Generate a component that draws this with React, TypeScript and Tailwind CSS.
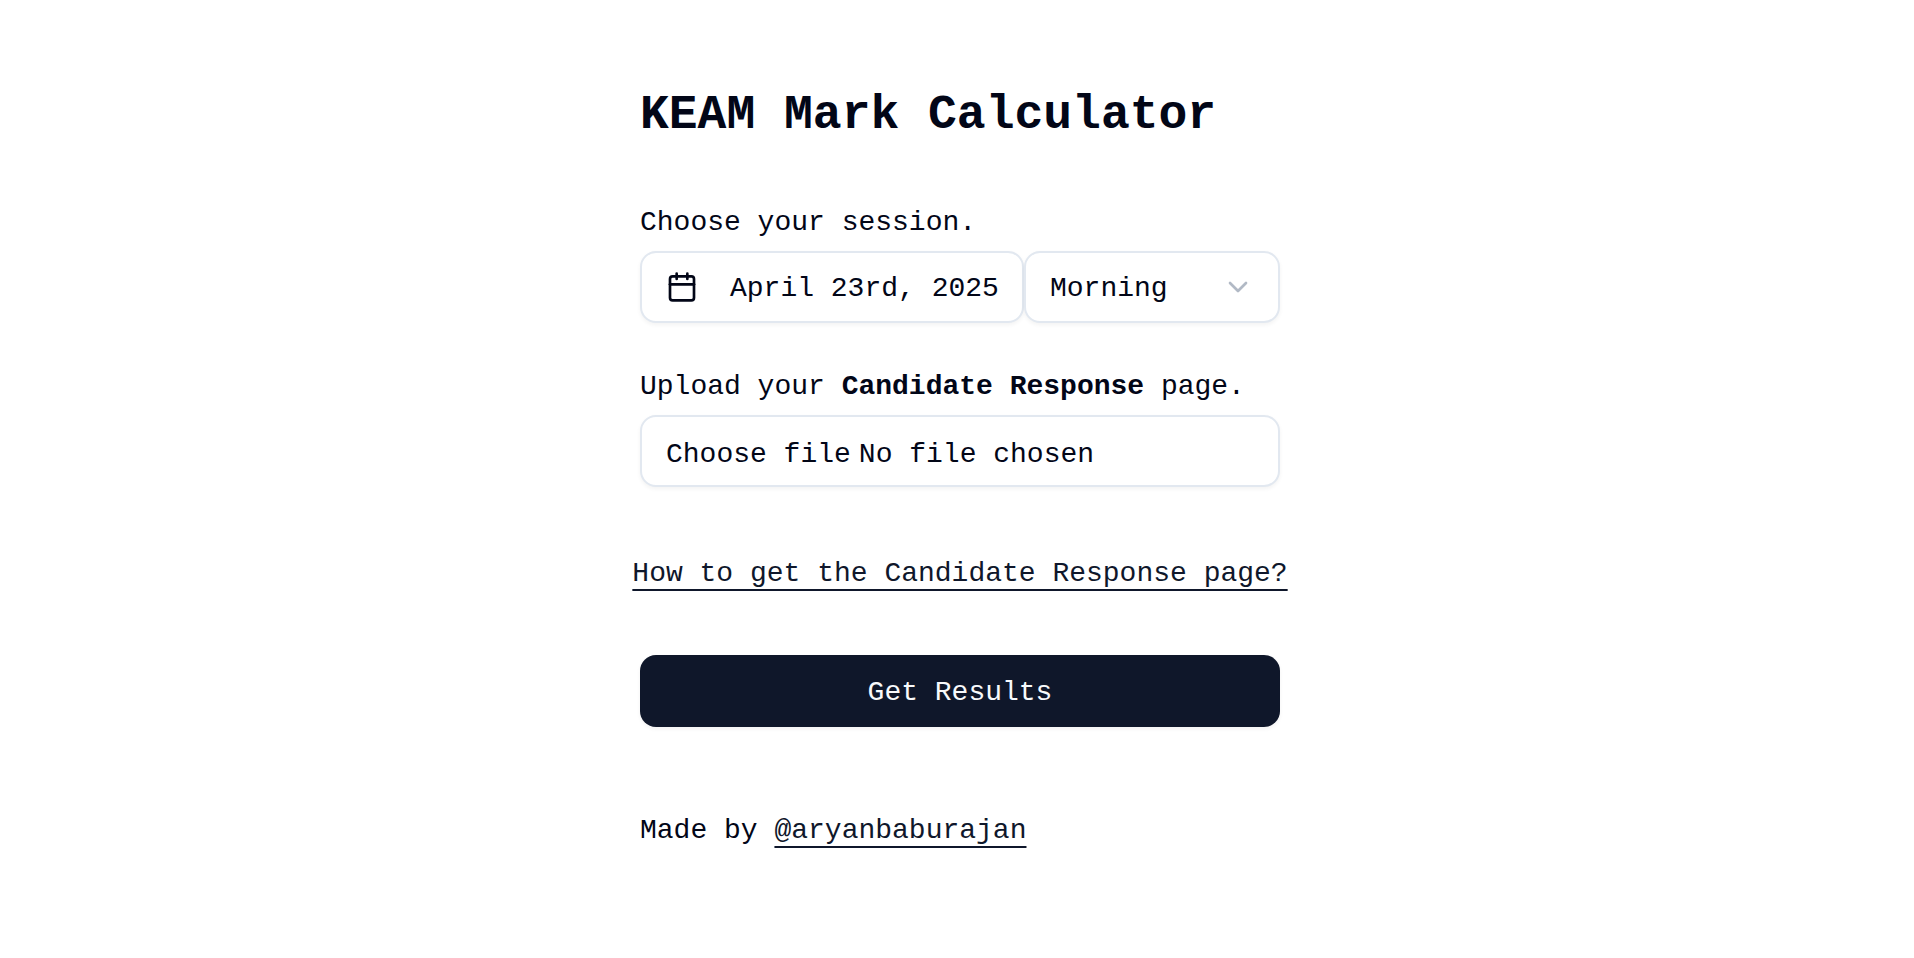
import { useState } from "react";
import { Calendar, ChevronDown } from "lucide-react";

const field =
  "h-[72px] rounded-2xl border-2 border-slate-200 bg-white shadow-[0_2px_4px_0_rgb(0_0_0/0.05)]";

export default function App() {
  const [session, setSession] = useState("Morning");
  const [fileName, setFileName] = useState("No file chosen");

  return (
    <main className="flex flex-col items-center pt-[83px] pb-20 pl-[6px] font-['Liberation_Mono',monospace] text-[28px] leading-10 text-[#020617]">
      <form
        className="flex w-full max-w-[640px] flex-col"
        onSubmit={(event) => event.preventDefault()}
      >
        <h1 className="text-5xl leading-16 font-bold whitespace-nowrap">KEAM Mark Calculator</h1>

        <div className="mt-14 flex flex-col gap-2">
          <label htmlFor="session">Choose your session.</label>
          <div className="flex">
            <button
              type="button"
              className={`${field} flex w-3/5 items-center gap-8 px-6 whitespace-nowrap`}
            >
              <Calendar className="size-8 shrink-0" />
              <span className="pt-1">April 23rd, 2025</span>
            </button>
            <div className="relative w-2/5">
              <select
                id="session"
                value={session}
                onChange={(event) => setSession(event.target.value)}
                className={`${field} w-full appearance-none px-6 pt-1`}
              >
                <option>Morning</option>
                <option>Afternoon</option>
              </select>
              <ChevronDown className="pointer-events-none absolute top-5 right-[26px] size-8 text-[#b1b9c5]" />
            </div>
          </div>
        </div>

        <div className="mt-11 flex flex-col gap-2">
          <label htmlFor="response" className="whitespace-nowrap">
            Upload your <strong className="font-bold">Candidate Response</strong> page.
          </label>
          <label
            htmlFor="response"
            className={`${field} flex items-center gap-2 px-6 pt-2 whitespace-nowrap`}
          >
            <input
              id="response"
              type="file"
              className="sr-only"
              onChange={(event) => setFileName(event.target.files?.[0]?.name ?? "No file chosen")}
            />
            <span>Choose file</span>
            <span>{fileName}</span>
          </label>
        </div>

        <a
          href="#help"
          className="mt-[67px] self-center whitespace-nowrap text-slate-900 underline decoration-2 underline-offset-8"
        >
          How to get the Candidate Response page?
        </a>

        <button
          type="submit"
          className="mt-[61px] h-[72px] rounded-2xl bg-[#0f172a] pt-1 text-slate-50 shadow-[0_2px_4px_0_rgb(0_0_0/0.05)]"
        >
          Get Results
        </button>

        <p className="mt-21 whitespace-nowrap">
          Made by{" "}
          <a
            href="#aryanbaburajan"
            className="text-slate-900 underline decoration-2 underline-offset-8"
          >
            @aryanbaburajan
          </a>
        </p>
      </form>
    </main>
  );
}
